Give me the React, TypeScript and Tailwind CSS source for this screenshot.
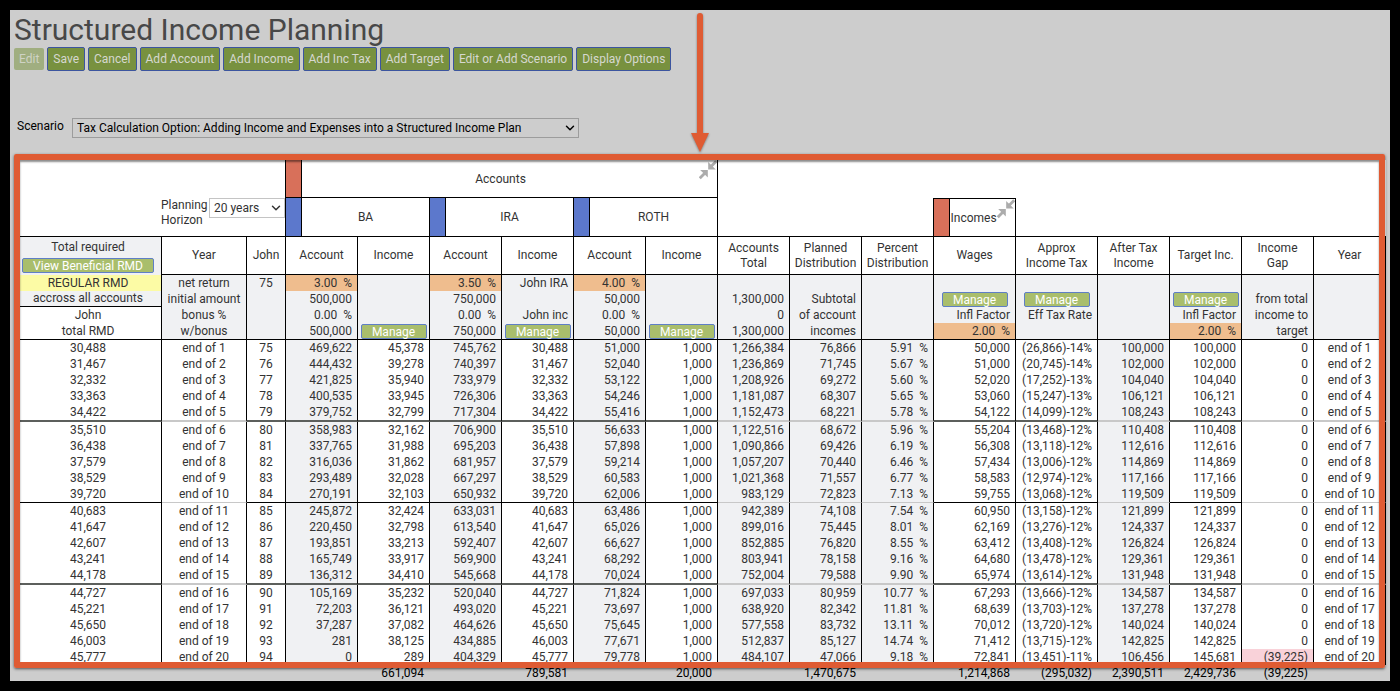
import React from 'react';
import { clsx } from 'clsx';
import { ChevronDown } from 'lucide-react';

type Align = 'center' | 'right';

interface Column {
  width: number;
  align: Align;
  shaded: boolean;
  darkRule: boolean;
}

const columns: Column[] = [
  { width: 142, align: 'center', shaded: false, darkRule: true },
  { width: 85, align: 'center', shaded: false, darkRule: false },
  { width: 39, align: 'center', shaded: false, darkRule: true },
  { width: 72, align: 'right', shaded: true, darkRule: true },
  { width: 72, align: 'right', shaded: false, darkRule: true },
  { width: 72, align: 'right', shaded: true, darkRule: true },
  { width: 72, align: 'right', shaded: false, darkRule: true },
  { width: 72, align: 'right', shaded: true, darkRule: true },
  { width: 72, align: 'right', shaded: false, darkRule: true },
  { width: 72, align: 'right', shaded: true, darkRule: false },
  { width: 72, align: 'right', shaded: true, darkRule: false },
  { width: 72, align: 'right', shaded: true, darkRule: false },
  { width: 82, align: 'right', shaded: false, darkRule: true },
  { width: 82, align: 'right', shaded: false, darkRule: true },
  { width: 72, align: 'right', shaded: true, darkRule: false },
  { width: 72, align: 'right', shaded: false, darkRule: true },
  { width: 72, align: 'right', shaded: false, darkRule: false },
  { width: 72, align: 'center', shaded: false, darkRule: false },
];

// RMD | BA account | BA income | IRA account | ROTH account | total | planned | percent | wages | tax | after tax
const raw = `30,488|469,622|45,378|745,762|51,000|1,266,384|76,866|5.91|50,000|(26,866)-14%|100,000
31,467|444,432|39,278|740,397|52,040|1,236,869|71,745|5.67|51,000|(20,745)-14%|102,000
32,332|421,825|35,940|733,979|53,122|1,208,926|69,272|5.60|52,020|(17,252)-13%|104,040
33,363|400,535|33,945|726,306|54,246|1,181,087|68,307|5.65|53,060|(15,247)-13%|106,121
34,422|379,752|32,799|717,304|55,416|1,152,473|68,221|5.78|54,122|(14,099)-12%|108,243
35,510|358,983|32,162|706,900|56,633|1,122,516|68,672|5.96|55,204|(13,468)-12%|110,408
36,438|337,765|31,988|695,203|57,898|1,090,866|69,426|6.19|56,308|(13,118)-12%|112,616
37,579|316,036|31,862|681,957|59,214|1,057,207|70,440|6.46|57,434|(13,006)-12%|114,869
38,529|293,489|32,028|667,297|60,583|1,021,368|71,557|6.77|58,583|(12,974)-12%|117,166
39,720|270,191|32,103|650,932|62,006|983,129|72,823|7.13|59,755|(13,068)-12%|119,509
40,683|245,872|32,424|633,031|63,486|942,389|74,108|7.54|60,950|(13,158)-12%|121,899
41,647|220,450|32,798|613,540|65,026|899,016|75,445|8.01|62,169|(13,276)-12%|124,337
42,607|193,851|33,213|592,407|66,627|852,885|76,820|8.55|63,412|(13,408)-12%|126,824
43,241|165,749|33,917|569,900|68,292|803,941|78,158|9.16|64,680|(13,478)-12%|129,361
44,178|136,312|34,410|545,668|70,024|752,004|79,588|9.90|65,974|(13,614)-12%|131,948
44,727|105,169|35,232|520,040|71,824|697,033|80,959|10.77|67,293|(13,666)-12%|134,587
45,221|72,203|36,121|493,020|73,697|638,920|82,342|11.81|68,639|(13,703)-12%|137,278
45,650|37,287|37,082|464,626|75,645|577,558|83,732|13.11|70,012|(13,720)-12%|140,024
46,003|281|38,125|434,885|77,671|512,837|85,127|14.74|71,412|(13,715)-12%|142,825
45,777|0|289|404,329|79,778|484,107|47,066|9.18|72,841|(13,451)-11%|106,456`;

const rows: string[][] = raw.split('\n').map((line, i) => {
  const [rmd, ba, baInc, ira, roth, total, planned, pct, wages, tax, after] = line.split('|');
  const last = i === 19;
  const year = `end of ${i + 1}`;
  return [
    rmd, year, String(75 + i), ba, baInc, ira, rmd, roth, '1,000', total, planned,
    `${pct}  %`, wages, tax, after, last ? '145,681' : after, last ? '(39,225)' : '0', year,
  ];
});

const totals = [
  '', '', '', '', '661,094', '', '789,581', '', '20,000', '', '1,470,675', '',
  '1,214,868', '(295,032)', '2,390,511', '2,429,736', '(39,225)', '',
];

const setup: string[][] = [
  ['REGULAR RMD', 'net return', '75', '3.00  %', '', '3.50  %', 'John IRA', '4.00  %', '', '', '', '', '', '', '', '', '', ''],
  ['accross all accounts', 'initial amount', '', '500,000', '', '750,000', '', '50,000', '', '1,300,000', 'Subtotal', '', 'MANAGE', 'MANAGE', '', 'MANAGE', 'from total', ''],
  ['John', 'bonus %', '', '0.00  %', '', '0.00  %', 'John inc', '0.00  %', '', '0', 'of account', '', 'Infl Factor', 'Eff Tax Rate', '', 'Infl Factor', 'income to', ''],
  ['total RMD', 'w/bonus', '', '500,000', 'MANAGE', '750,000', 'MANAGE', '50,000', 'MANAGE', '1,300,000', 'incomes', '', '2.00  %', '', '', '2.00  %', 'target', ''],
];

const headings = [
  'Year', 'John', 'Account', 'Income', 'Account', 'Income', 'Account', 'Income',
  'Accounts Total', 'Planned Distribution', 'Percent Distribution', 'Wages',
  'Approx Income Tax', 'After Tax Income', 'Target Inc.', 'Income Gap', 'Year',
];

const actions = [
  'Save', 'Cancel', 'Add Account', 'Add Income', 'Add Inc Tax', 'Add Target',
  'Edit or Add Scenario', 'Display Options',
];

const isRate = (r: number, c: number) =>
  (r === 0 && (c === 3 || c === 5 || c === 7)) || (r === 3 && (c === 12 || c === 15));

function SmallButton({ children, wide }: { children: string; wide?: boolean }) {
  return (
    <button
      type="button"
      className={clsx(
        'mx-auto block h-[15px] rounded-[2px] border border-[#5f7fc6] bg-[#a9be6c] text-[12px] leading-[14px] text-white',
        wide ? 'w-[132px]' : 'w-[66px]',
      )}
    >
      {children}
    </button>
  );
}

function CollapseButton() {
  return (
    <button type="button" aria-label="Collapse" className="h-5 w-[18px] shrink-0 self-start">
      <svg viewBox="0 0 18 20" className="block h-5 w-[18px]" fill="none" stroke="#acacac" strokeWidth="2.8">
        <path d="M0.8 18.2 L6.5 12.5" />
        <path d="M17.2 1.3 L11.5 7" />
        <path d="M1.2 9.9 H8.8 V17.5 Z" fill="#acacac" stroke="none" />
        <path d="M9.2 1.9 V9.5 H16.8 Z" fill="#acacac" stroke="none" />
      </svg>
    </button>
  );
}

function AccountHeading({ name }: { name: string }) {
  return (
    <th colSpan={2} className="border-r border-b border-black bg-white p-0 font-normal">
      <div className="flex h-[38px] items-center">
        <span className="h-full w-4 border-r border-black bg-[#5c78cc]" />
        <span className="flex-1 text-center">{name}</span>
      </div>
    </th>
  );
}

function PlanTable() {
  return (
    <table className="w-full table-fixed border-separate border-spacing-0 text-[12px] leading-4 text-[#333]">
      <colgroup>
        {columns.map((c, i) => (
          <col key={i} style={{ width: c.width }} />
        ))}
      </colgroup>
      <thead>
        <tr>
          <td colSpan={3} rowSpan={2} className="border-r border-b border-black bg-white p-0 align-bottom">
            <div className="flex items-start justify-end pb-2">
              <label htmlFor="horizon" className="w-12 leading-[15px]">
                Planning Horizon
              </label>
              <div className="relative">
                <select
                  id="horizon"
                  className="block h-5 w-[76px] appearance-none border border-[#c4c4c4] bg-white pl-1 text-[12px] text-[#333]"
                >
                  <option>20 years</option>
                </select>
                <ChevronDown
                  className="pointer-events-none absolute top-[3px] right-[2px]"
                  size={14}
                  strokeWidth={2.5}
                />
              </div>
            </div>
          </td>
          <th colSpan={6} className="border-r border-b border-black bg-white p-0 font-normal">
            <div className="flex h-[37px] items-center">
              <span className="h-full w-4 border-r border-black bg-[#d8705a]" />
              <span className="flex-1 text-center">Accounts</span>
              <CollapseButton />
            </div>
          </th>
          <td colSpan={9} className="bg-white p-0" />
        </tr>
        <tr>
          <AccountHeading name="BA" />
          <AccountHeading name="IRA" />
          <AccountHeading name="ROTH" />
          <td colSpan={3} className="border-r border-b border-black bg-white p-0" />
          <th className="border-t border-r border-b border-black bg-white p-0 font-normal">
            <div className="flex h-[37px] items-center">
              <span className="h-full w-4 shrink-0 border-r border-black bg-[#d8705a]" />
              <span className="flex-1">Incomes</span>
              <CollapseButton />
            </div>
          </th>
          <td colSpan={5} className="border-b border-black bg-white p-0" />
        </tr>
        <tr className="h-[38px]">
          <th className="border-r border-black bg-[#f0f1f3] p-0 pt-[2px] pr-[5px] align-top font-normal">
            <div className="mb-[3px]">Total required</div>
            <SmallButton wide>View Beneficial RMD</SmallButton>
          </th>
          {headings.map((h, i) => (
            <th
              key={i}
              className="border-r border-b border-black bg-white px-1 py-0 leading-[15px] font-normal"
            >
              {h}
            </th>
          ))}
        </tr>
      </thead>
      <tbody>
        {setup.map((cells, r) => (
          <tr key={r}>
            {cells.map((text, c) => (
              <td
                key={c}
                className={clsx(
                  'h-4 border-r border-black py-0 pl-0 whitespace-pre',
                  columns[c].align === 'center' ? 'text-center' : 'text-right',
                  text === 'MANAGE' || (columns[c].align === 'center' && c > 0) ? 'pr-0' : 'pr-[5px]',
                  isRate(r, c) && 'bg-[#efbd8e]',
                  r === 0 && c === 0 && 'bg-[#fcfba5]',
                  r > 1 && c === 0 && 'bg-white',
                  !isRate(r, c) && !(c === 0 && r !== 1) && 'bg-[#f0f1f3]',
                  r === 3 && 'border-b',
                  r === 1 && c === 0 && 'border-b leading-[15px]',
                )}
              >
                {text === 'MANAGE' ? <SmallButton>Manage</SmallButton> : text}
              </td>
            ))}
          </tr>
        ))}
        {rows.map((cells, r) => {
          const endsGroup = r === 4 || r === 9 || r === 14;
          const thick = r === 4 || r === 14;
          return (
            <tr key={r}>
              {cells.map((text, c) => {
                const col = columns[c];
                return (
                  <td
                    key={c}
                    className={clsx(
                      'border-r border-r-black py-0 pl-0 whitespace-pre',
                      col.align === 'center' ? 'text-center' : 'text-right',
                      col.align === 'center' && c > 0 ? 'pr-0' : 'pr-[5px]',
                      text === '(39,225)' ? 'bg-[#f9d2d9]' : col.shaded ? 'bg-[#f0f1f3]' : 'bg-white',
                      endsGroup && (thick ? 'border-b-2' : 'border-b'),
                      endsGroup && !col.darkRule && 'border-b-[#c8c8c8]',
                      endsGroup && col.darkRule && (thick ? 'border-b-[#5c5f5c]' : 'border-b-black'),
                    )}
                  >
                    {text}
                  </td>
                );
              })}
            </tr>
          );
        })}
      </tbody>
      <tfoot>
        <tr className="h-4 text-black">
          {totals.map((text, c) => (
            <td key={c} className="py-0 pr-[6px] pl-0 text-right">
              {text}
            </td>
          ))}
        </tr>
      </tfoot>
    </table>
  );
}

export default function App() {
  return (
    <div className="min-h-screen bg-black p-[10px] font-['Roboto',sans-serif]">
      <main className="relative bg-[#cdcdcd] px-1">
        <h1 className="pt-[2px] text-[30px] leading-[35px] text-[#484848]">Structured Income Planning</h1>
        <div className="flex items-center gap-[3px] text-[12px]">
          <button type="button" disabled className="h-[22px] rounded-[2px] bg-[#a0ae80] px-[5px] text-[#cfd3c5]">
            Edit
          </button>
          {actions.map((a) => (
            <button
              key={a}
              type="button"
              className="h-6 rounded-[2px] border border-[#3c559f] bg-[#78913f] px-[5px] text-[#d6d8d0]"
            >
              {a}
            </button>
          ))}
        </div>
        <div className="flex items-start pt-[47px] pb-4 pl-[3px]">
          <label htmlFor="scenario" className="w-[55px] text-[12px] leading-4 text-black">
            Scenario
          </label>
          <div className="relative">
            <select
              id="scenario"
              className="block h-5 w-[507px] appearance-none border border-[#9c9c9c] bg-[#cdcdcd] pl-1 text-[12px] text-black"
            >
              <option>Tax Calculation Option: Adding Income and Expenses into a Structured Income Plan</option>
            </select>
            <ChevronDown
              className="pointer-events-none absolute top-[3px] right-[2px] text-black"
              size={14}
              strokeWidth={2.5}
            />
          </div>
        </div>
        <div className="relative pt-[6px] pl-[6px]">
          <PlanTable />
          <div className="pointer-events-none absolute top-0 right-px bottom-[13px] left-0 rounded-[2px] border-[6px] border-[#df5b33] shadow-[0_1px_3px_rgba(0,0,0,0.6),inset_0_2px_2px_rgba(0,0,0,0.45)]" />
        </div>
        <svg
          viewBox="0 0 24 144"
          className="pointer-events-none absolute top-[2px] left-1/2 h-36 w-6 -translate-x-1/2 drop-shadow-[0_1px_1px_rgba(0,0,0,0.4)]"
          aria-hidden="true"
        >
          <path d="M12 4 V124" stroke="#df5b33" strokeWidth="6" strokeLinecap="round" />
          <path d="M3 121 H21 L12 140 Z" fill="#df5b33" />
        </svg>
      </main>
    </div>
  );
}
